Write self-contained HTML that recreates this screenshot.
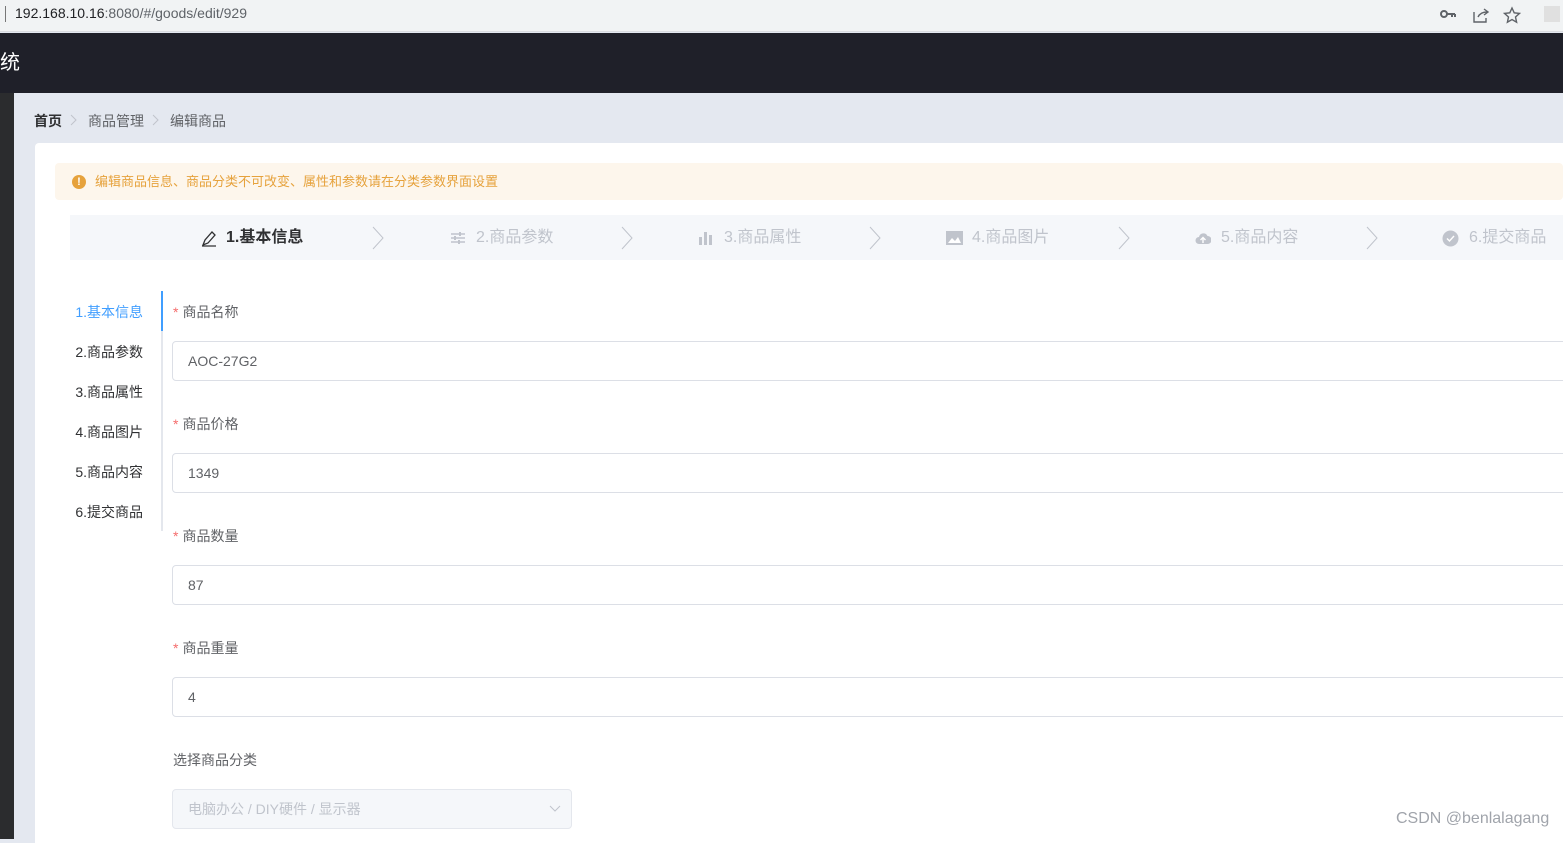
<!DOCTYPE html>
<html><head><meta charset="utf-8"><style>
*{margin:0;padding:0;box-sizing:border-box}
body{width:1563px;height:839px;overflow:hidden;position:relative;font-family:"Liberation Sans","Noto Sans CJK SC",sans-serif;background:#e4e8f0;color:#606266}
.abs{position:absolute}
.bar{left:0;top:0;width:1563px;height:32px;background:#f1f3f4;border-bottom:1px solid #dadce0}
.url{left:0;top:0;width:1530px;height:29px;background:#f1f3f4;border-radius:0 15px 15px 0}
.hdr{left:0;top:33px;width:1563px;height:60px;background:#1f2029;color:#fff;font-size:20px;line-height:60px}
.side{left:0;top:93px;width:14px;height:746px;background:#2b2c2e}
.card{left:35px;top:143px;width:1528px;height:700px;background:#fff;border-radius:4px 0 0 0}
.alert{left:55px;top:163px;width:1508px;height:37px;background:#fdf6ec;border-radius:4px;color:#e6a23c;font-size:13px;line-height:37px;padding-left:40px}
.steps{left:70px;top:215px;width:1493px;height:45px;background:#f5f7fa}
.step{top:215px;height:45px;line-height:45px;font-size:16px;color:#c0c4cc;white-space:nowrap}
.ic{top:230px}
.chev{top:226px;width:16px;height:24px}
.tab{width:143px;text-align:right;font-size:14px;color:#303133;left:0}
.lbl{left:173px;font-size:14px;color:#606266}
.lbl b{color:#f56c6c;font-weight:normal;margin-right:4px}
.inp{left:172px;width:1400px;height:40px;border:1px solid #dcdfe6;border-radius:4px;font-size:14px;color:#606266;line-height:38px;padding-left:15px}
</style></head><body>
<div class="abs bar"></div>
<div class="abs url"></div>
<div class="abs" style="left:5px;top:6px;width:1px;height:16px;background:#777"></div>
<div class="abs" style="left:15px;top:5px;font-size:14px;color:#202124">192.168.10.16<span style="color:#5f6368">:8080/#/goods/edit/929</span></div>
<svg class="abs" style="left:1440px;top:6px" width="100" height="18" viewBox="0 0 100 18">
<circle cx="4" cy="8" r="3" fill="none" stroke="#5f6368" stroke-width="2"/><path d="M7 8h8M12 8v3M15 8v3" stroke="#5f6368" stroke-width="2"/>
<path d="M34 6v10h12v-4M38 11c2-4 5-5 9-5M44 3l4 3-4 3" fill="none" stroke="#5f6368" stroke-width="1.4"/>
<path d="M72 2l2.2 4.8 5.3.6-4 3.6 1.1 5.2-4.6-2.7-4.6 2.7 1.1-5.2-4-3.6 5.3-.6z" fill="none" stroke="#5f6368" stroke-width="1.4"/>
</svg>
<div class="abs" style="left:1544px;top:6px;width:16px;height:16px;background:#e0e0e0"></div>
<div class="abs hdr">统</div>
<div class="abs side"></div>
<div class="abs" style="left:34px;top:111px;font-size:14px;color:#303133;font-weight:bold">首页</div>
<svg class="abs" style="left:70px;top:114px" width="8" height="12"><path d="M1 1l5 5-5 5" fill="none" stroke="#c0c4cc"/></svg>
<div class="abs" style="left:88px;top:111px;font-size:14px;color:#606266">商品管理</div>
<svg class="abs" style="left:152px;top:114px" width="8" height="12"><path d="M1 1l5 5-5 5" fill="none" stroke="#c0c4cc"/></svg>
<div class="abs" style="left:170px;top:111px;font-size:14px;color:#606266">编辑商品</div>
<div class="abs card"></div>
<div class="abs alert">编辑商品信息、商品分类不可改变、属性和参数请在分类参数界面设置</div>
<div class="abs" style="left:72px;top:175px;width:14px;height:14px;border-radius:50%;background:#e6a23c;color:#fff;font-size:11px;line-height:14px;text-align:center;font-weight:bold">!</div>
<div class="abs steps"></div>
<svg class="abs ic" style="left:200px" width="18" height="18"><path d="M3 15l2-5 7-8 3 3-7 8zM2 16h14" fill="none" stroke="#303133" stroke-width="1.3"/></svg>
<div class="abs step" style="left:226px;color:#303133;font-weight:bold">1.基本信息</div>
<svg class="abs ic" style="left:450px" width="16" height="16"><path d="M1 4h14M1 8h14M1 12h14" stroke="#c0c4cc" stroke-width="1.5"/><rect x="9" y="2" width="2" height="4" fill="#c0c4cc"/><rect x="4" y="6" width="2" height="4" fill="#c0c4cc"/><rect x="8" y="10" width="2" height="4" fill="#c0c4cc"/></svg>
<div class="abs step" style="left:476px">2.商品参数</div>
<svg class="abs ic" style="left:698px" width="16" height="16"><rect x="1" y="7" width="3" height="8" fill="#c0c4cc"/><rect x="6" y="2" width="3" height="13" fill="#c0c4cc"/><rect x="11" y="5" width="3" height="10" fill="#c0c4cc"/></svg>
<div class="abs step" style="left:724px">3.商品属性</div>
<svg class="abs ic" style="left:946px" width="17" height="16"><rect x="0" y="1" width="17" height="14" fill="#c0c4cc"/><path d="M2 13l4-5 3 3 3-4 3 6z" fill="#fff"/></svg>
<div class="abs step" style="left:972px">4.商品图片</div>
<svg class="abs ic" style="left:1195px" width="16" height="16"><path d="M4 14a3.5 3.5 0 010-7 4.5 4.5 0 018.5-1A3.5 3.5 0 0112.5 14z" fill="#c0c4cc"/><path d="M8 13V8M5.5 10L8 7.5 10.5 10" stroke="#fff" fill="none" stroke-width="1.4"/></svg>
<div class="abs step" style="left:1221px">5.商品内容</div>
<svg class="abs ic" style="left:1442px" width="17" height="17"><circle cx="8.5" cy="8.5" r="8" fill="#c0c4cc"/><path d="M5 8.5l2.5 2.5 4.5-5" stroke="#fff" fill="none" stroke-width="1.4"/></svg>
<div class="abs step" style="left:1469px">6.提交商品</div>
<svg class="abs chev" style="left:371px"><path d="M2 1l10 11-10 11" fill="none" stroke="#c0c4cc"/></svg>
<svg class="abs chev" style="left:620px"><path d="M2 1l10 11-10 11" fill="none" stroke="#c0c4cc"/></svg>
<svg class="abs chev" style="left:868px"><path d="M2 1l10 11-10 11" fill="none" stroke="#c0c4cc"/></svg>
<svg class="abs chev" style="left:1117px"><path d="M2 1l10 11-10 11" fill="none" stroke="#c0c4cc"/></svg>
<svg class="abs chev" style="left:1365px"><path d="M2 1l10 11-10 11" fill="none" stroke="#c0c4cc"/></svg>
<div class="abs" style="left:161px;top:291px;width:2px;height:240px;background:#e4e7ed"></div>
<div class="abs" style="left:161px;top:291px;width:2px;height:40px;background:#409eff"></div>
<div class="abs tab" style="top:302px;color:#409eff">1.基本信息</div>
<div class="abs tab" style="top:342px">2.商品参数</div>
<div class="abs tab" style="top:382px">3.商品属性</div>
<div class="abs tab" style="top:422px">4.商品图片</div>
<div class="abs tab" style="top:462px">5.商品内容</div>
<div class="abs tab" style="top:502px">6.提交商品</div>
<div class="abs lbl" style="top:302px"><b>*</b>商品名称</div>
<div class="abs inp" style="top:341px">AOC-27G2</div>
<div class="abs lbl" style="top:414px"><b>*</b>商品价格</div>
<div class="abs inp" style="top:453px">1349</div>
<div class="abs lbl" style="top:526px"><b>*</b>商品数量</div>
<div class="abs inp" style="top:565px">87</div>
<div class="abs lbl" style="top:638px"><b>*</b>商品重量</div>
<div class="abs inp" style="top:677px">4</div>
<div class="abs lbl" style="top:750px">选择商品分类</div>
<div class="abs inp" style="top:789px;width:400px;background:#f5f7fa;border-color:#e4e7ed;color:#c0c4cc">电脑办公 / DIY硬件 / 显示器</div>
<svg class="abs" style="left:548px;top:803px" width="14" height="10"><path d="M2 3l5 5 5-5" fill="none" stroke="#c0c4cc"/></svg>
<div class="abs" style="left:1396px;top:810px;font-size:16px;color:#a0a4ab">CSDN @benlalagang</div>
</body></html>
